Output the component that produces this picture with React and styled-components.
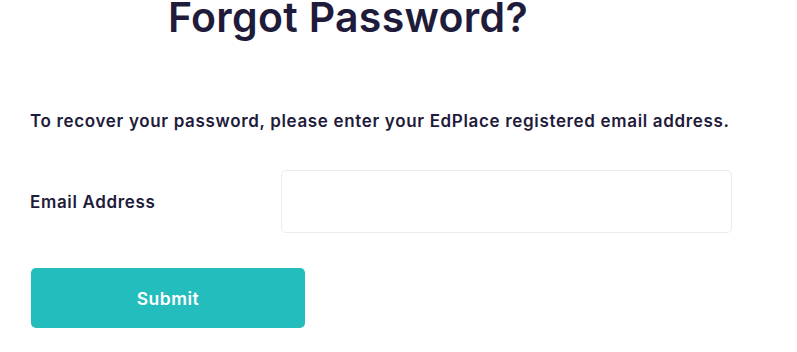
import React from 'react';
import styled, { createGlobalStyle } from 'styled-components';

const GlobalStyle = createGlobalStyle`
  html, body {
    margin: 0;
    padding: 0;
    background: #ffffff;
  }
  body {
    font-family: Inter, "Open Sans", sans-serif;
    color: #1f1b3b;
  }
`;

const Page = styled.div`
  width: 797px;
  height: 352px;
  overflow: hidden;
  padding: 0 30px;
  box-sizing: border-box;
`;

const Title = styled.h1`
  margin: -9px 0 0 138px;
  font-size: 41px;
  line-height: 52px;
  font-weight: 600;
  color: #1f1b3b;
  letter-spacing: 0.3px;
`;

const Intro = styled.p`
  margin: 66px 0 0;
  font-size: 17px;
  line-height: 24px;
  font-weight: 600;
  letter-spacing: 0.66px;
  color: #1f1b3b;
`;

const FieldRow = styled.div`
  display: flex;
  align-items: center;
  margin-top: 37px;
`;

const Label = styled.label`
  width: 251px;
  font-size: 17px;
  font-weight: 600;
  letter-spacing: 0.66px;
  color: #1f1b3b;
`;

const Input = styled.input`
  width: 451px;
  height: 63px;
  box-sizing: border-box;
  border: 1px solid #ececec;
  border-radius: 5px;
  padding: 0 14px;
  font-size: 16px;
  font-family: inherit;
  outline: none;
`;

const SubmitButton = styled.button`
  display: block;
  margin-top: 35px;
  margin-left: 1px;
  width: 274px;
  height: 60px;
  border: none;
  border-radius: 5px;
  background: #24bdbd;
  color: #ffffff;
  font-family: inherit;
  font-size: 17.5px;
  font-weight: 600;
  letter-spacing: 0.5px;
  cursor: pointer;
`;

export default function App() {
  return (
    <Page>
      <GlobalStyle />
      <Title>Forgot Password?</Title>
      <Intro>To recover your password, please enter your EdPlace registered email address.</Intro>
      <FieldRow>
        <Label htmlFor="email">Email Address</Label>
        <Input id="email" type="email" />
      </FieldRow>
      <SubmitButton type="button">Submit</SubmitButton>
    </Page>
  );
}
